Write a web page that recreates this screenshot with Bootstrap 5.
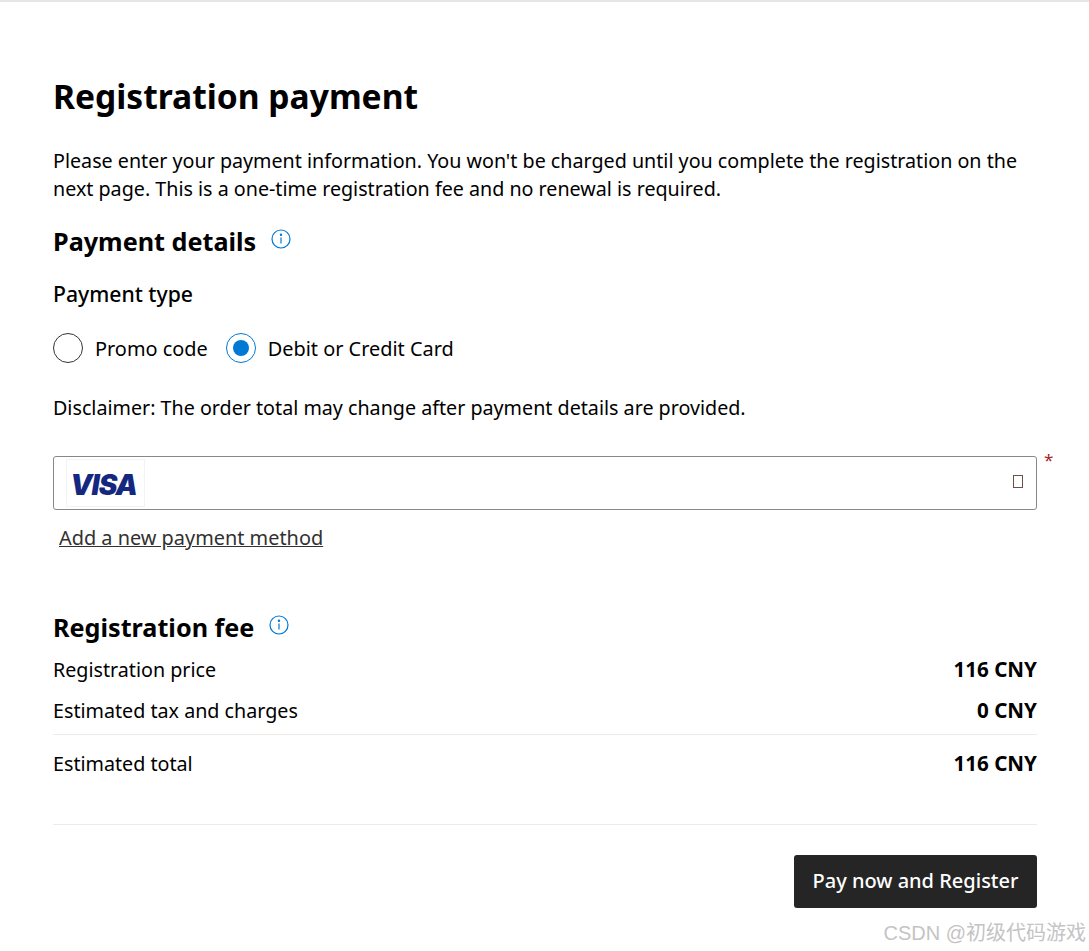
<!DOCTYPE html>
<html lang="en">
<head>
    <meta charset="UTF-8">
    <meta name="viewport" content="width=device-width, initial-scale=1.0">
    <title>Registration payment</title>
    <link href="https://cdn.jsdelivr.net/npm/bootstrap@5.3.0/dist/css/bootstrap.min.css" rel="stylesheet">
    <style>
        body {
            background: #fff;
            color: #000;
            font-family: "Noto Sans", "Open Sans", sans-serif;
            font-size: 19.7px;
            border-top: 2px solid #e6e6e6;
        }

        .pay-page {
            padding: 52px 52px 0 53px;
            position: relative;
            height: 949px;
        }

        .pay-title {
            font-size: 33.6px;
            font-weight: 700;
            line-height: 44px;
            margin: 20px 0 29px;
        }

        .pay-intro {
            line-height: 28px;
            margin: 0 0 21px;
        }

        .pay-heading-row {
            column-gap: 15px;
        }

        .pay-heading {
            font-size: 25.2px;
            font-weight: 700;
            line-height: 34px;
            margin: 0;
        }

        .info-icon {
            margin-top: 5px;
        }

        .pay-label {
            font-size: 21.2px;
            font-weight: 500;
            line-height: 28px;
            margin: 22px 0 26px;
        }

        .radio-row span.radio-text {
            margin: 0 18px 0 12px;
            font-size: 19.9px;
        }

        .radio-dot {
            width: 30px;
            height: 30px;
            margin-top: -1px;
            border: 1px solid #333;
            border-radius: 50%;
            flex-shrink: 0;
        }

        .radio-dot.is-on {
            border-color: #0078d4;
            padding: 6px;
        }

        .radio-dot.is-on span {
            display: block;
            width: 16px;
            height: 16px;
            border-radius: 50%;
            background: #0078d4;
        }

        .pay-note {
            margin: 29px 0 34px;
        }

        .card-select {
            height: 54px;
            border: 1px solid #8a8886;
            border-radius: 3px;
            padding: 3px 13px 3px 12px;
        }

        .visa-box {
            width: 79px;
            height: 48px;
            padding-right: 4px;
            border: 1px solid #f3f3f3;
        }

        .visa-word {
            font-family: Inter, "Liberation Sans", sans-serif;
            font-size: 28px;
            font-style: italic;
            font-weight: 900;
            color: #14287f;
            letter-spacing: -1px;
            margin-top: 3px;
        }

        .missing-glyph {
            width: 10px;
            height: 13px;
            margin-bottom: 3px;
            border: 1px solid #6b5148;
        }

        .req-star {
            position: absolute;
            left: 1044px;
            top: 449px;
            color: #a4262c;
            font-size: 17px;
            line-height: 18px;
        }

        .add-wrap {
            margin: 13px 0 57px;
        }

        .add-link {
            color: #323130;
            margin-left: 6px;
            font-size: 19.9px;
            line-height: 28px;
        }

        .fee-row {
            line-height: 29px;
            padding: 6px 0;
        }

        .fee-row strong {
            font-size: 20.6px;
        }

        .fee-first {
            margin-top: 5px;
        }

        .fee-line {
            border-top: 1px solid #edebe9;
        }

        .fee-line-a {
            margin-top: 3px;
        }

        .fee-line-b {
            margin-top: 40px;
        }

        .fee-total {
            margin-top: 8px;
        }

        .pay-actions {
            margin-top: 30px;
        }

        .btn-pay {
            background: #252525;
            color: #fff;
            font-size: 20px;
            font-weight: 500;
            width: 243px;
            height: 53px;
            border-radius: 3px;
            border: 0;
        }

        .btn-pay:hover {
            background: #252525;
            color: #fff;
        }

        .csdn-mark {
            position: absolute;
            right: 3px;
            top: 918px;
            color: #c4c4c4;
            font-family: "Liberation Sans", "Noto Sans CJK SC", sans-serif;
            font-size: 20px;
            line-height: 26px;
        }
    </style>
</head>
<body>
    <div class="pay-page">
        <h1 class="pay-title">Registration payment</h1>
        <p class="pay-intro">Please enter your payment information. You won't be charged until you complete the registration on the next page. This is a one-time registration fee and no renewal is required.</p>

        <!-- Payment details -->
        <div class="pay-heading-row d-flex align-items-start">
            <h2 class="pay-heading">Payment details</h2>
            <svg class="info-icon" width="20" height="20" viewBox="0 0 20 20" fill="none" stroke="#0078d4" stroke-width="1.2">
                <circle cx="10" cy="10" r="9"/>
                <path d="M10 8.5v6"/>
                <circle cx="10" cy="5.8" r=".6" fill="#0078d4"/>
            </svg>
        </div>
        <p class="pay-label">Payment type</p>
        <div class="radio-row d-flex align-items-center">
            <span class="radio-dot"></span>
            <span class="radio-text">Promo code</span>
            <span class="radio-dot is-on"><span></span></span>
            <span class="radio-text">Debit or Credit Card</span>
        </div>
        <p class="pay-note">Disclaimer: The order total may change after payment details are provided.</p>

        <div class="card-select d-flex align-items-center justify-content-between">
            <div class="visa-box d-flex align-items-center justify-content-center"><span class="visa-word">VISA</span></div>
            <span class="missing-glyph"></span>
        </div>
        <span class="req-star">*</span>
        <div class="add-wrap"><a class="add-link" href="#">Add a new payment method</a></div>

        <!-- Registration fee -->
        <div class="pay-heading-row d-flex align-items-start">
            <h2 class="pay-heading">Registration fee</h2>
            <svg class="info-icon" width="20" height="20" viewBox="0 0 20 20" fill="none" stroke="#0078d4" stroke-width="1.2">
                <circle cx="10" cy="10" r="9"/>
                <path d="M10 8.5v6"/>
                <circle cx="10" cy="5.8" r=".6" fill="#0078d4"/>
            </svg>
        </div>
        <div class="fee-row fee-first d-flex justify-content-between"><span>Registration price</span><strong>116 CNY</strong></div>
        <div class="fee-row d-flex justify-content-between"><span>Estimated tax and charges</span><strong>0 CNY</strong></div>
        <div class="fee-line fee-line-a"></div>
        <div class="fee-row fee-total d-flex justify-content-between"><span>Estimated total</span><strong>116 CNY</strong></div>
        <div class="fee-line fee-line-b"></div>
        <div class="pay-actions d-flex justify-content-end">
            <button type="button" class="btn btn-pay">Pay now and Register</button>
        </div>
        <div class="csdn-mark">CSDN @初级代码游戏</div>
    </div>
    <script src="https://cdn.jsdelivr.net/npm/bootstrap@5.3.0/dist/js/bootstrap.bundle.min.js"></script>
</body>
</html>
